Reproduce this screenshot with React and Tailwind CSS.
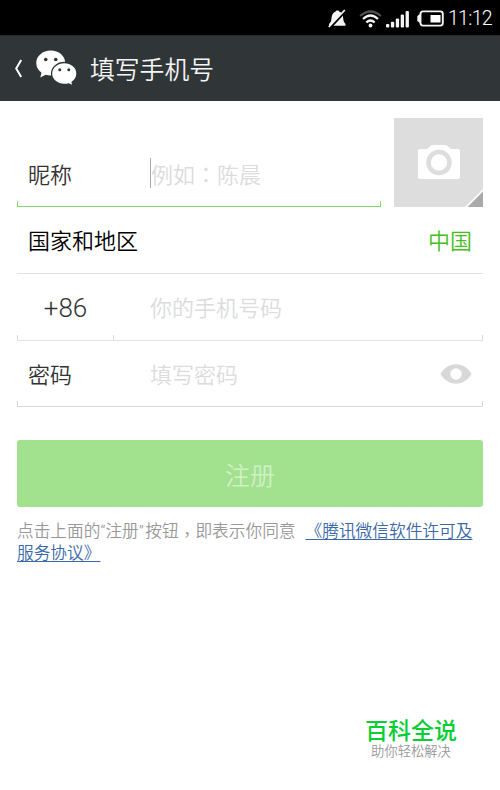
function StatusBar() {
  return (
    <div className="flex h-[35px] shrink-0 items-center bg-black pl-[328px] pt-0.5 text-white">
      <svg className="h-[20px] w-[20px] shrink-0" viewBox="0 0 20 20">
        <path d="M9.500 1.400c1 0 1.500.4 1.600 1C14.200 3.300 15 6 15.200 9c.1 3 .9 4.300 2.300 6v1.700H1V15c1.700-1.700 2.300-3 2.500-6C3.700 6 4.900 3.300 7.700 2.400c.1-.6.800-1 1.800-1z" fill="#f4f4f4" />
        <path d="M2.200 18.800 18 1.800" stroke="#000" strokeWidth="2.200" />
        <path d="M.8 18 16.800 1" stroke="#f4f4f4" strokeWidth="1.800" />
      </svg>
      <svg className="ml-[11px] h-[18px] w-[23px] shrink-0" viewBox="0 0 23 18" fill="none" strokeWidth="2.200">
        <path d="M1.200 6Q11.500-3 21.800 6" stroke="#505050" />
        <path d="M4 9Q11.500 2 19 9" stroke="#f4f4f4" />
        <path d="M7.300 12.500Q11.500 8.500 15.700 12.500" stroke="#f4f4f4" />
        <circle cx="11.500" cy="15.500" r="1.900" fill="#f4f4f4" />
      </svg>
      <svg className="ml-[4px] h-[18px] w-[23px] shrink-0" viewBox="0 0 23 18" fill="#f4f4f4">
        <rect x="0" y="14" width="3.300" height="3.500" rx="1" />
        <rect x="4.900" y="11.800" width="3.300" height="5.700" rx="1" />
        <rect x="9.800" y="8.500" width="3.300" height="9" rx="1" />
        <rect x="14.700" y="4.500" width="3.300" height="13" rx="1" />
        <rect x="19.600" y="1" width="3.300" height="16.500" rx="1" />
      </svg>
      <svg className="ml-[8px] h-[17px] w-[27px] shrink-0" viewBox="0 0 27 17">
        <rect x="3.500" y="1.400" width="22.300" height="14.200" rx="2.500" fill="none" stroke="#f4f4f4" strokeWidth="1.900" />
        <path d="M3 4 .3 6v5L3 13z" fill="#f4f4f4" />
        <rect x="13.500" y="5" width="10" height="7.500" fill="#fff" />
      </svg>
      <span className="ml-[4px] pt-px font-['Roboto'] text-[19.500px] leading-none font-light tracking-[-0.700px]">11:12</span>
    </div>
  );
}

function Header() {
  return (
    <header className="flex h-[66px] shrink-0 items-center border-t border-[#25292b] bg-[#303538] pl-[14px] text-[#f5f5f5]">
      <svg className="h-[19px] w-[9px]" viewBox="0 0 9 19" fill="none">
        <path d="M7.200 1 2.200 9.500l5 8.500" stroke="#fff" strokeWidth="2" />
      </svg>
      <svg className="mb-[2px] ml-[12px] h-[37px] w-[43px]" viewBox="0 0 42.500 37">
        <path d="M15.500 1.500C7.500 1.500 1 7 1 14c0 4 2 7.400 5.300 9.700L5 28.500l5.500-2.800c1.600.4 3.300.7 5 .7 8 0 14.500-5.600 14.500-12.500S23.500 1.500 15.500 1.500z" fill="#fff" />
        <path d="M29 13.500c-7 0-12.700 4.900-12.700 11S22 35.500 29 35.500c1.500 0 3-.2 4.300-.6l4.700 2-1.200-3.700c3-2 4.900-5.200 4.900-8.700 0-6.100-5.700-11-12.700-11z" fill="#fff" stroke="#303538" strokeWidth="1.300" />
        <g fill="#303538">
          <circle cx="10.500" cy="10.500" r="1.800" />
          <circle cx="20.500" cy="10.500" r="1.800" />
          <circle cx="24.500" cy="20.800" r="1.500" />
          <circle cx="33.500" cy="20.800" r="1.500" />
        </g>
      </svg>
      <h1 className="ml-[12px] pt-[6px] text-[24.800px] leading-none font-[350]">填写手机号</h1>
    </header>
  );
}

function Tick({ className }) {
  return <i className={`block h-[5px] w-px ${className}`} />;
}

export default function App() {
  return (
    <div className="flex h-[790px] w-[500px] flex-col overflow-hidden bg-white font-['Roboto','Noto_Sans_CJK_SC',sans-serif]">
      <StatusBar />
      <Header />
      <main className="flex flex-1 flex-col px-[17px] pt-[17px]">
        <div className="flex h-[89px] justify-between">
          <div className="flex w-[364px] flex-col justify-end">
            <div className="flex h-[66px] items-center pt-[9px] pl-[11px] text-[22px] leading-none">
              <span className="w-[122px] pt-[6px] font-[350] text-[#333]">昵称</span>
              <span className="h-[30px] w-px bg-[#aaa]" />
              <span className="pt-[3px] font-[350] text-[#dcdcdc]">例如<span className="font-['Noto_Sans_CJK_TC']">：</span>陈晨</span>
            </div>
            <div className="flex h-[6px] justify-between border-b border-[#7edb63]">
              <Tick className="bg-[#7edb63]" />
              <Tick className="bg-[#7edb63]" />
            </div>
          </div>
          <svg className="h-[89px] w-[89px]" viewBox="0 0 89 89">
            <path d="M0 0h89v89H0z" fill="#ddd" />
            <path d="M26 31h7l4-3.500q1-.5 2-.5h12q1 0 2 .5l4 3.500h7q2 0 2 2v26q0 2-2 2H26q-2 0-2-2V33q0-2 2-2z" fill="#fff" />
            <circle cx="45" cy="44.500" r="10.500" fill="none" stroke="#ddd" strokeWidth="4.500" />
            <path d="M71 89 89 71v18z" fill="#fff" />
            <path d="M73.500 89 89 73.500V89z" fill="#aaa" />
          </svg>
        </div>
        <div className="flex h-[67px] items-center justify-between border-b border-[#e2e2e2] px-[11px] pt-[4px] text-[22px] leading-none font-[350]">
          <span className="text-black">国家和地区</span>
          <span className="text-[#45c01a]">中国</span>
        </div>
        <div className="flex h-[61px] items-center pt-[7px] text-[22px] leading-none">
          <span className="w-[97px] text-center text-[26px] font-light text-[#333]">+86</span>
          <span className="ml-[36px] pt-[2px] font-[350] text-[#dcdcdc]">你的手机号码</span>
        </div>
        <div className="flex h-[6px] border-b border-[#e2e2e2]">
          <Tick className="bg-[#dcdcdc]" />
          <Tick className="ml-[95px] bg-[#dcdcdc]" />
          <Tick className="ml-auto bg-[#dcdcdc]" />
        </div>
        <div className="flex h-[60px] items-center pt-[5px] pr-[11px] pl-[11px] text-[22px] leading-none font-[350]">
          <span className="w-[122px] pt-[4px] text-[#333]">密码</span>
          <span className="pt-[4px] text-[#dcdcdc]">填写密码</span>
          <svg className="ml-auto h-[20px] w-[32px]" viewBox="0 0 32 20">
            <path d="M.5 10C4 4 9.500.3 16 .3S28 4 31.500 10C28 16 22.500 19.700 16 19.700S4 16 .5 10z" fill="#d8d8d8" />
            <circle cx="16" cy="10" r="5.700" fill="#fff" />
          </svg>
        </div>
        <div className="flex h-[6px] justify-between border-b border-[#d8d8d8]">
          <Tick className="bg-[#d8d8d8]" />
          <Tick className="bg-[#d8d8d8]" />
        </div>
        <button className="mt-[33px] h-[67px] w-full shrink-0 rounded-[3px] bg-[#a2e18d] pt-[5px] text-[25px] leading-none font-[350] text-[#d0f0c6]">注册</button>
        <p className="mt-[14px] h-[44px] text-[16.700px] leading-[22px] font-[350] whitespace-nowrap text-[#999]">
          点击上面的“注册”<span className="ml-[1.500px]">按钮</span><span className="align-[-4px] font-['Noto_Sans_CJK_TC'] leading-none">，</span>即表示你同意
          <a className="ml-[10px] text-[#3a68a8] underline underline-offset-2">《腾讯微信软件许可及<br />服务协议》</a>
        </p>
        <footer className="mt-[155px] ml-[344px] w-[100px] text-center leading-none whitespace-nowrap">
          <div className="text-[23px] font-medium text-[#05cf35]">百科全说</div>
          <div className="mt-[2px] text-[13.300px] font-[350] text-[#999]">助你轻松解决</div>
        </footer>
      </main>
    </div>
  );
}
